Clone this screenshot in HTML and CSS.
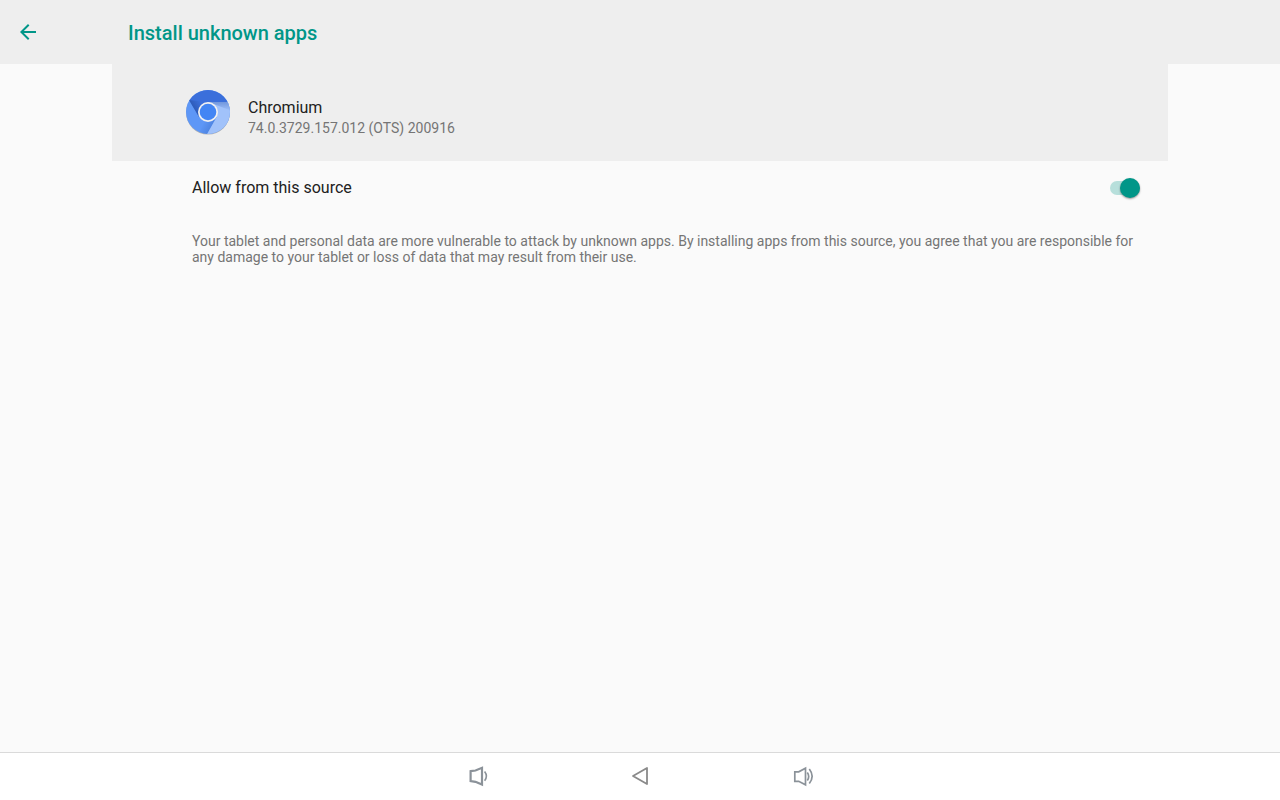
FILE: index.html
```html
<!DOCTYPE html>
<html lang="en">
<head>
    <meta charset="UTF-8">
    <meta name="viewport" content="width=device-width, initial-scale=1.0">
    <title>Install unknown apps</title>
    <link rel="stylesheet" href="styles.css">
</head>
<body>
    <header class="toolbar">
        <button class="back" type="button" aria-label="Back">
            <svg width="24" height="24" viewBox="0 0 24 24"><path fill="#009688" d="M20 11H7.83l5.59-5.59L12 4l-8 8 8 8 1.41-1.41L7.83 13H20v-2z"/></svg>
        </button>
        <h1>Install unknown apps</h1>
    </header>

    <main class="content">
        <section class="app">
            <svg class="app-icon" width="48" height="48" viewBox="0 0 48 48" aria-hidden="true">
                <defs>
                    <clipPath id="disc"><circle cx="24" cy="24" r="22"/></clipPath>
                    <linearGradient id="shadeTop" x1="0" y1="0" x2="0" y2="1">
                        <stop offset="0" stop-color="#2a56b0" stop-opacity=".4"/>
                        <stop offset="1" stop-color="#2a56b0" stop-opacity="0"/>
                    </linearGradient>
                    <linearGradient id="shadeLeft" gradientUnits="userSpaceOnUse" x1="10" y1="21" x2="18" y2="16">
                        <stop offset="0" stop-color="#1f4594" stop-opacity=".5"/>
                        <stop offset="1" stop-color="#1f4594" stop-opacity="0"/>
                    </linearGradient>
                    <linearGradient id="shadeBottom" gradientUnits="userSpaceOnUse" x1="29" y1="38" x2="20" y2="33">
                        <stop offset="0" stop-color="#2f5fb8" stop-opacity=".35"/>
                        <stop offset="1" stop-color="#2f5fb8" stop-opacity="0"/>
                    </linearGradient>
                </defs>
                <circle cx="24" cy="24.6" r="22" fill="#000" opacity=".25"/>
                <g clip-path="url(#disc)">
                    <path fill="#5e97f6" d="M0 0h48v48H0z"/>
                    <path fill="url(#shadeBottom)" d="M32.7 29L22 48h-8l6-14z"/>
                    <path fill="#a1c2fa" d="M24 14h24v34H22l10.7-19z"/>
                    <path fill="url(#shadeTop)" d="M24 14h24v9L24 14z"/>
                    <path fill="#3b6fdb" d="M0 0h48v14H24l-9 15L5 12z"/>
                    <path fill="url(#shadeLeft)" d="M5 12l10 17 9-15z"/>
                </g>
                <circle cx="24" cy="24" r="10" fill="#f1f1f1"/>
                <circle cx="24" cy="24" r="8.3" fill="#4285f4"/>
            </svg>
            <div class="app-text">
                <h2>Chromium</h2>
                <p>74.0.3729.157.012 (OTS) 200916</p>
            </div>
        </section>

        <div class="setting">
            <label for="allow">Allow from this source</label>
            <input class="switch" type="checkbox" id="allow" checked>
        </div>

        <p class="note">Your tablet and personal data are more vulnerable to attack by unknown apps. By installing apps from this source, you agree that you are responsible for any damage to your tablet or loss of data that may result from their use.</p>
    </main>

    <nav class="navbar">
        <button type="button" aria-label="Volume down">
            <svg width="24" height="24" viewBox="0 0 24 24" fill="none" stroke="#8b9299">
                <path stroke-width="2.2" d="M4.600 7.200L9.500 6.500 16 3.800v16.700L9.500 17.800 4.600 17z"/>
                <path stroke-width="1.6" d="M18.600 7.500q3.600 4.700 0 9.200"/>
            </svg>
        </button>
        <button type="button" aria-label="Back">
            <svg width="24" height="24" viewBox="0 0 24 24" fill="none" stroke="#8a8a8a" stroke-width="1.8">
                <path stroke-linejoin="round" d="M19 4v16L5 12z"/>
            </svg>
        </button>
        <button type="button" aria-label="Volume up">
            <svg width="24" height="24" viewBox="0 0 24 24" fill="none" stroke="#8b9299" stroke-width="1.7">
                <path d="M4.800 7.800H8.700L15.500 4.200v16.600L8.700 17.300H4.800z"/>
                <path d="M17.300 8.500q2.800 4 0 8M19.300 5q5.700 7.300 0 14.600"/>
            </svg>
        </button>
    </nav>
</body>
</html>
```
FILE: styles.css
```css
* {
    box-sizing: border-box;
}
body {
    display: flex;
    flex-direction: column;
    min-height: 100vh;
    margin: 0;
    background: #fafafa;
    color: #212121;
    font-family: Roboto, sans-serif;
}
h1, h2, p {
    margin: 0;
}
button {
    display: flex;
    padding: 0;
    border: 0;
    background: none;
    cursor: pointer;
}

/* Top bar */
.toolbar {
    display: flex;
    align-items: center;
    height: 64px;
    padding: 0 16px;
    background: #eeeeee;
}
.toolbar h1 {
    margin-left: 88px;
    padding-top: 2px;
    color: #009688;
    font-size: 20px;
    font-weight: 500;
    line-height: 24px;
}

/* Page */
.content {
    flex: 1;
    margin: 0 112px;
}
.app {
    display: flex;
    gap: 16px;
    padding: 24px 72px 23px;
    background: #eeeeee;
}
.app-text {
    padding-top: 10px;
}
.app h2 {
    font-size: 16px;
    font-weight: 400;
    line-height: 20px;
}
.app p {
    color: #757575;
    font-size: 14px;
    line-height: 20px;
}
.setting {
    display: flex;
    align-items: center;
    justify-content: space-between;
    height: 53px;
    padding: 0 28px 0 80px;
    font-size: 16px;
}
.switch {
    display: flex;
    align-items: center;
    justify-content: flex-end;
    width: 30px;
    height: 14px;
    margin: 0;
    border-radius: 7px;
    background: #b7dfdb;
    appearance: none;
    cursor: pointer;
}
.switch::before {
    content: "";
    flex: none;
    width: 20px;
    height: 20px;
    border-radius: 50%;
    background: #009688;
    box-shadow: 0 1px 2px rgba(0, 0, 0, 0.4);
}
.switch:not(:checked) {
    justify-content: flex-start;
    background: #bdbdbd;
}
.switch:not(:checked)::before {
    background: #fafafa;
}
.note {
    padding: 19px 24px 16px 80px;
    color: #757575;
    font-size: 14px;
    line-height: 16px;
}

/* System navigation */
.navbar {
    display: flex;
    align-items: center;
    justify-content: center;
    gap: 138px;
    height: 48px;
    padding-bottom: 1px;
    border-top: 1px solid #dadada;
    background: #ffffff;
}
```
